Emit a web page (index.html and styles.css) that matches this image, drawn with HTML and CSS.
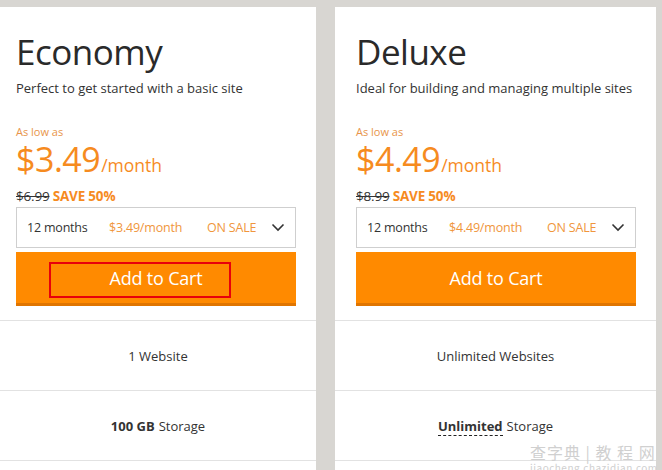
FILE: index.html
```html
<!DOCTYPE html>
<html>
<head>
<meta charset="utf-8">
<link rel="stylesheet" href="styles.css">
</head>
<body>
<div class="page">
  <div class="card card-first">
    <div class="card-top">
      <h2 class="title">Economy</h2>
      <p class="subtitle">Perfect to get started with a basic site</p>
      <div class="low">As low as</div>
      <div class="price"><span class="amount">$3.49</span><span class="per">/month</span></div>
      <div class="save"><s class="old">$6.99</s> <b class="pct">SAVE 50%</b></div>
      <div class="select">
        <span class="term">12 months</span>
        <span class="sel-price">$3.49/month</span>
        <span class="sale">ON SALE</span>
        <svg class="chev" width="14" height="9" viewBox="0 0 14 9"><path d="M1.5 1.5 L7 7 L12.5 1.5" fill="none" stroke="#333" stroke-width="1.6"/></svg>
      </div>
      <div class="btn-wrap">
        <button class="btn">Add to Cart</button>
        <span class="annot"></span>
      </div>
    </div>
    <div class="feature">1 Website</div>
    <div class="feature"><b>100 GB</b> Storage</div>
    <div class="feature"></div>
  </div>
  <div class="card">
    <div class="card-top">
      <h2 class="title">Deluxe</h2>
      <p class="subtitle">Ideal for building and managing multiple sites</p>
      <div class="low">As low as</div>
      <div class="price"><span class="amount">$4.49</span><span class="per">/month</span></div>
      <div class="save"><s class="old">$8.99</s> <b class="pct">SAVE 50%</b></div>
      <div class="select">
        <span class="term">12 months</span>
        <span class="sel-price">$4.49/month</span>
        <span class="sale">ON SALE</span>
        <svg class="chev" width="14" height="9" viewBox="0 0 14 9"><path d="M1.5 1.5 L7 7 L12.5 1.5" fill="none" stroke="#333" stroke-width="1.6"/></svg>
      </div>
      <div class="btn-wrap">
        <button class="btn">Add to Cart</button>
      </div>
    </div>
    <div class="feature">Unlimited Websites</div>
    <div class="feature"><b class="dotted">Unlimited</b> Storage</div>
    <div class="feature"></div>
    <div class="watermark"><span class="wm1">查字典 | 教 程 网</span><span class="wm2">jiaocheng.chazidian.com</span></div>
  </div>
</div>
</body>
</html>
```

FILE: styles.css
```css
html, body {
  margin: 0;
  padding: 0;
}
body {
  background: #d8d6d2;
  font-family: "Open Sans", "Noto Sans", sans-serif;
  color: #333;
}
.page {
  display: flex;
  gap: 19px;
  padding-top: 7px;
  width: 662px;
  height: 463px;
  overflow: hidden;
}
.card {
  width: 321px;
  flex-shrink: 0;
  background: #fff;
  position: relative;
}
.card-first {
  width: 316px;
}
.card-top {
  padding: 24px 20px 14px 21px;
}
.card-first .card-top {
  padding-left: 16px;
}
.title {
  margin: 0;
  font-weight: 400;
  font-size: 35px;
  line-height: 42px;
  color: #2a2a2a;
  letter-spacing: -0.5px;
}
.subtitle {
  margin: 6px 0 0;
  font-size: 13px;
  line-height: 18px;
  color: #333;
}
.low {
  margin-top: 28px;
  font-size: 11px;
  line-height: 14px;
  color: #e8954a;
}
.price {
  color: #f68b1f;
  line-height: 40px;
  margin-top: 0;
}
.amount {
  font-size: 34px;
  letter-spacing: -0.5px;
}
.per {
  font-size: 17.5px;
  margin-left: 1px;
}
.save {
  font-size: 13.5px;
  line-height: 18px;
  margin-top: 1px;
  letter-spacing: -0.2px;
}
.old {
  color: #333;
}
.pct {
  color: #f68b1f;
  font-weight: 700;
}
.select {
  margin-top: 2px;
  height: 39px;
  border: 1px solid #cfcfcf;
  display: flex;
  align-items: center;
  padding: 0 10px;
  font-size: 12.5px;
  letter-spacing: -0.2px;
}
.term {
  color: #333;
  width: 82px;
}
.sel-price {
  color: #f0963c;
  width: 98px;
}
.sale {
  color: #f0963c;
  flex: 1;
}
.chev {
  display: block;
}
.btn-wrap {
  position: relative;
  margin-top: 4px;
}
.btn {
  display: block;
  width: 100%;
  height: 54px;
  border: 0;
  border-bottom: 3px solid #e07500;
  background: #ff8a00;
  color: #fff;
  font-family: inherit;
  font-size: 18px;
  letter-spacing: -0.2px;
  padding: 0;
  cursor: pointer;
}
.annot {
  position: absolute;
  left: 33px;
  top: 10px;
  width: 178px;
  height: 32px;
  border: 2px solid #e8000b;
}
.feature {
  height: 69px;
  border-top: 1px solid #e2e2e2;
  display: flex;
  align-items: center;
  justify-content: center;
  font-size: 13px;
  color: #333;
}
.feature b {
  font-weight: 700;
  margin-right: 4px;
}
.dotted {
  border-bottom: 1px dashed #222;
  line-height: 17px;
  padding-top: 2px;
}
.watermark {
  position: absolute;
  left: 195px;
  top: 436px;
  display: flex;
  flex-direction: column;
  align-items: flex-start;
  color: #d0d0d0;
  font-family: "Noto Sans CJK SC", sans-serif;
}
.wm1 {
  font-size: 16px;
  line-height: 19px;
  letter-spacing: 1px;
}
.wm2 {
  font-size: 10px;
  line-height: 11px;
  letter-spacing: 0.5px;
}
```
